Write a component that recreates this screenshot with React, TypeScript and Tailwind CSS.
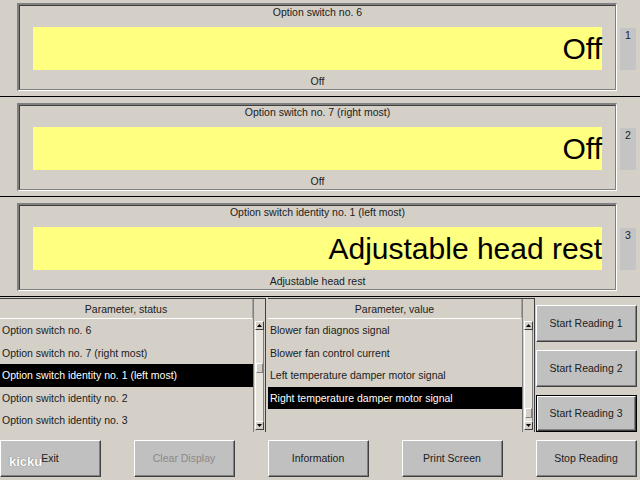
const FONT = "font-['Liberation_Sans',Arial,sans-serif]";

function Panel({ title, value, small, n }: { title: string; value: string; small: string; n: number }) {
  return (
    <div className="h-[97px] flex border-b border-black">
      {/* sunken frame */}
      <div className="ml-[17px] mt-[3px] w-[600px] h-[88px] border-t-2 border-l-2 border-t-[#808080] border-l-[#808080] border-b border-r border-b-white border-r-white">
        <div className="h-full flex flex-col border-t border-l border-t-[#404040] border-l-[#404040] border-b border-r border-b-[#808080] border-r-[#808080] px-[13px]">
          <div className="h-[13px] leading-[13px] text-center text-[10.5px] text-[#202020]">{title}</div>
          <div className="mt-[8px] h-[43px] bg-[#ffff80] flex items-center justify-end">
            <span className="text-[30px] leading-none text-black pt-[1px]">{value}</span>
          </div>
          <div className="mt-[5px] h-[13px] leading-[13px] text-center text-[10.5px] text-[#202020]">{small}</div>
        </div>
      </div>
      {/* side tab */}
      <div className="ml-[3px] mt-[28px] w-[16px] h-[42px] bg-[#c4c4c4] text-[10.5px] leading-[13px] text-center pt-[1px] text-[#202020]">
        {n}
      </div>
    </div>
  );
}

function Btn({ label, disabled, focused, className }: { label: string; disabled?: boolean; focused?: boolean; className?: string }) {
  return (
    <div className={`h-[37px] ${focused ? "border border-black" : ""} ${className ?? ""}`}>
      <div className="h-full border-t border-l border-t-white border-l-white border-b border-r border-b-[#404040] border-r-[#404040]">
        <div
          className={`h-full flex items-center justify-center bg-[#c0c0c0] border-b border-r border-b-[#808080] border-r-[#808080] text-[10.5px] pt-[1px] ${
            disabled ? "text-[#8a8a8a]" : "text-[#202020]"
          }`}
        >
          {label}
        </div>
      </div>
    </div>
  );
}

function Scrollbar({ thumbTop }: { thumbTop: number }) {
  return (
    <div className="w-[12px] h-full flex flex-col border-l border-l-[#808080] bg-[#d4d0c8]">
      <div className="h-[20px]" />
      <div className="flex-1 flex flex-col px-[1px] pb-[2px]">
        <div className="h-[9px] mt-[2px] bg-[#d4d0c8] border border-t-white border-l-white border-b-[#404040] border-r-[#404040] flex items-center justify-center">
          <svg width="5" height="3" viewBox="0 0 5 3">
            <path d="M2.5 0 L5 3 L0 3 Z" fill="#000" />
          </svg>
        </div>
        <div className="flex-1 relative border-l border-r border-l-white border-r-[#808080] bg-[#e6e3dc]">
          <div
            className="absolute left-0 right-0 h-[10px] bg-[#d4d0c8] border border-t-white border-l-white border-b-[#808080] border-r-[#808080]"
            style={{ top: thumbTop }}
          />
        </div>
        <div className="h-[9px] bg-[#d4d0c8] border border-t-white border-l-white border-b-[#404040] border-r-[#404040] flex items-center justify-center">
          <svg width="5" height="3" viewBox="0 0 5 3">
            <path d="M0 0 L5 0 L2.5 3 Z" fill="#000" />
          </svg>
        </div>
      </div>
    </div>
  );
}

function List({ header, rows, selected, thumbTop, width }: { header: string; rows: string[]; selected: number; thumbTop: number; width: string }) {
  const heights = ["h-[23px]", "h-[22px]", "h-[23px]", "h-[22px]", "h-[23px]"];
  return (
    <div className={`${width} mt-[1px] h-[134px] flex border-t border-t-[#404040] border-r border-r-[#404040]`}>
      <div className="flex-1 flex flex-col">
        <div className="h-[20px] border-b border-b-white border-r border-r-[#a0a0a0] text-[10.5px] leading-[13px] pt-[4px] text-center text-[#202020]">
          {header}
        </div>
        {heights.map((h, i) => (
          <div
            key={i}
            className={`${h} flex items-center pl-[2px] pt-[1px] text-[10.5px] whitespace-nowrap ${
              i === selected ? "bg-black text-white" : "text-[#202020]"
            }`}
          >
            {rows[i] ?? ""}
          </div>
        ))}
      </div>
      <Scrollbar thumbTop={thumbTop} />
    </div>
  );
}

export default function App() {
  return (
    <div className={`${FONT} relative w-[640px] h-[480px] bg-[#d4d0c8] overflow-hidden`}>
      <div className="flex flex-col gap-[3px]">
        <Panel title="Option switch no. 6" value="Off" small="Off" n={1} />
        <Panel title="Option switch no. 7 (right most)" value="Off" small="Off" n={2} />
        <Panel title="Option switch identity no. 1 (left most)" value="Adjustable head rest" small="Adjustable head rest" n={3} />
      </div>

      <div className="h-[135px] flex">
        <List
          width="w-[266px]"
          header="Parameter, status"
          rows={[
            "Option switch no. 6",
            "Option switch no. 7 (right most)",
            "Option switch identity no. 1 (left most)",
            "Option switch identity no. 2",
            "Option switch identity no. 3",
          ]}
          selected={2}
          thumbTop={33}
        />
        <List
          width="ml-[2px] w-[267px]"
          header="Parameter, value"
          rows={[
            "Blower fan diagnos signal",
            "Blower fan control current",
            "Left temperature damper motor signal",
            "Right temperature damper motor signal",
          ]}
          selected={3}
          thumbTop={78}
        />
        <div className="ml-[1px] w-[101px] pt-[8px] flex flex-col gap-[8px]">
          <Btn label="Start Reading 1" />
          <Btn label="Start Reading 2" />
          <Btn label="Start Reading 3" focused />
        </div>
      </div>

      <div className="pt-[8px] flex gap-[33px]">
        <Btn label="Exit" className="w-[101px]" />
        <Btn label="Clear Display" disabled className="w-[101px]" />
        <Btn label="Information" className="w-[101px]" />
        <Btn label="Print Screen" className="w-[101px]" />
        <Btn label="Stop Reading" className="w-[101px]" />
      </div>

      <div className="absolute left-[9px] top-[452px] text-[13px] font-bold text-white [text-shadow:0_0_1px_#555]">
        kicku
      </div>
    </div>
  );
}
